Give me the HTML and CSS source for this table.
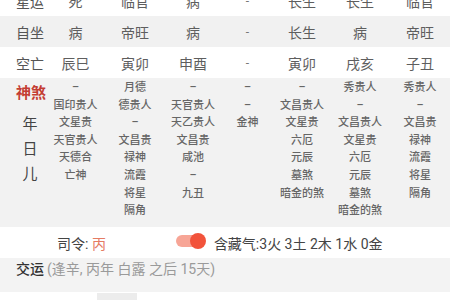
FILE: index.html
```html
<!DOCTYPE html>
<html lang="zh">
<head>
<meta charset="utf-8">
<link rel="stylesheet" href="styles.css">
</head>
<body>
<div class="page">
  <div class="row white">
    <div class="label">星运</div><div class="cell">死</div><div class="cell">临官</div><div class="cell">病</div><div class="cell dash">-</div><div class="cell">长生</div><div class="cell">长生</div><div class="cell">临官</div>
  </div>
  <div class="row gray">
    <div class="label">自坐</div><div class="cell">病</div><div class="cell">帝旺</div><div class="cell">病</div><div class="cell dash">-</div><div class="cell">长生</div><div class="cell">病</div><div class="cell">帝旺</div>
  </div>
  <div class="row white">
    <div class="label">空亡</div><div class="cell">辰巳</div><div class="cell">寅卯</div><div class="cell">申酉</div><div class="cell dash">-</div><div class="cell">寅卯</div><div class="cell">戌亥</div><div class="cell">子丑</div>
  </div>
  <div class="shensha">
    <div class="ss-label">
      <div class="ss-title">神煞</div>
      <div class="ss-side">年</div>
      <div class="ss-side">日</div>
      <div class="ss-side">儿</div>
    </div>
    <div class="ss-col"><span>–</span><span>国印贵人</span><span>文星贵</span><span>天官贵人</span><span>天德合</span><span>亡神</span></div>
    <div class="ss-col"><span>月德</span><span>德贵人</span><span>–</span><span>文昌贵</span><span>禄神</span><span>流霞</span><span>将星</span><span>隔角</span></div>
    <div class="ss-col"><span>–</span><span>天官贵人</span><span>天乙贵人</span><span>文昌贵</span><span>咸池</span><span>–</span><span>九丑</span></div>
    <div class="ss-col"><span>–</span><span>–</span><span>金神</span></div>
    <div class="ss-col"><span>–</span><span>文昌贵人</span><span>文星贵</span><span>六厄</span><span>元辰</span><span>墓煞</span><span>暗金的煞</span></div>
    <div class="ss-col"><span>秀贵人</span><span>–</span><span>文昌贵人</span><span>文星贵</span><span>六厄</span><span>元辰</span><span>墓煞</span><span>暗金的煞</span></div>
    <div class="ss-col"><span>秀贵人</span><span>–</span><span>文昌贵</span><span>禄神</span><span>流霞</span><span>将星</span><span>隔角</span></div>
  </div>
  <div class="siling">
    <span class="sl-text">司令: <em class="red">丙</em></span>
    <span class="toggle"><span class="knob"></span></span>
    <span class="sl-hide">含藏气:3火 3土 2木 1水 0金</span>
  </div>
  <div class="jiaoyun">
    <span class="jy-title">交运</span>
    <span class="jy-note">(逢辛, 丙年 白露 之后 15天)</span>
  </div>
  <div class="next">
    <div class="tab"></div>
  </div>
</div>
</body>
</html>
```
FILE: styles.css
```css
* { box-sizing: border-box; margin: 0; padding: 0; }
html, body { width: 450px; height: 300px; overflow: hidden; background: #fff; }
body {
  font-family: Roboto, "Noto Sans CJK SC", sans-serif;
  color: #555;
}
.page { margin-top: -15px; }

.row, .shensha {
  display: grid;
  grid-template-columns: 46px 59px 60px 56px 53px 56px 60px 60px;
}
.row {
  height: 31px;
  align-items: center;
  font-size: 14px;
}
.white { background: #fff; }
.gray { background: #f1f1f1; }
.label {
  padding-left: 16px;
  color: #555;
  white-space: nowrap;
}
.cell {
  text-align: center;
  color: #5e5e5e;
  white-space: nowrap;
}
.cell.dash { color: #777; font-size: 12px; }

.shensha {
  background: #f2f2f2;
  height: 149px;
  padding-top: 1px;
}
.ss-label {
  padding-left: 14px;
  display: flex;
  flex-direction: column;
  align-items: center;
}
.ss-title {
  color: #c43d33;
  font-size: 15px;
  font-weight: 700;
  line-height: 29px;
  padding-left: 2px;
}
.ss-side {
  color: #444;
  font-size: 15px;
  line-height: 25px;
}
.ss-title + .ss-side { margin-top: 4px; }
.ss-col {
  display: flex;
  flex-direction: column;
  align-items: center;
  font-size: 11px;
  line-height: 17.6px;
  color: #666;
  font-weight: 500;
  white-space: nowrap;
}

.siling {
  height: 31px;
  display: flex;
  align-items: center;
  padding-left: 57px;
  font-size: 14px;
  color: #444;
  background: #fff;
}
.sl-text { white-space: nowrap; }
.red { font-style: normal; color: #e57b63; }
.toggle {
  position: relative;
  width: 26px;
  height: 12px;
  border-radius: 6px;
  background: #f7a596;
  margin-left: 70px;
  margin-top: -3px;
}
.knob {
  position: absolute;
  right: -4px;
  top: -2px;
  width: 16px;
  height: 16px;
  border-radius: 50%;
  background: #f2533b;
}
.sl-hide {
  margin-left: 12px;
  color: #444;
  white-space: nowrap;
}

.jiaoyun {
  height: 34px;
  display: flex;
  align-items: flex-start;
  padding: 1px 0 0 16px;
  line-height: 20px;
  background: #f3f3f3;
  font-size: 14px;
  white-space: nowrap;
}
.jy-title { color: #333; font-weight: 500; }
.jy-note { color: #9a9a9a; margin-left: 3px; }

.next {
  height: 40px;
  background: #fff;
  padding: 1px 0 0 97px;
}
.tab {
  width: 40px;
  height: 30px;
  background: #ececec;
}
```
